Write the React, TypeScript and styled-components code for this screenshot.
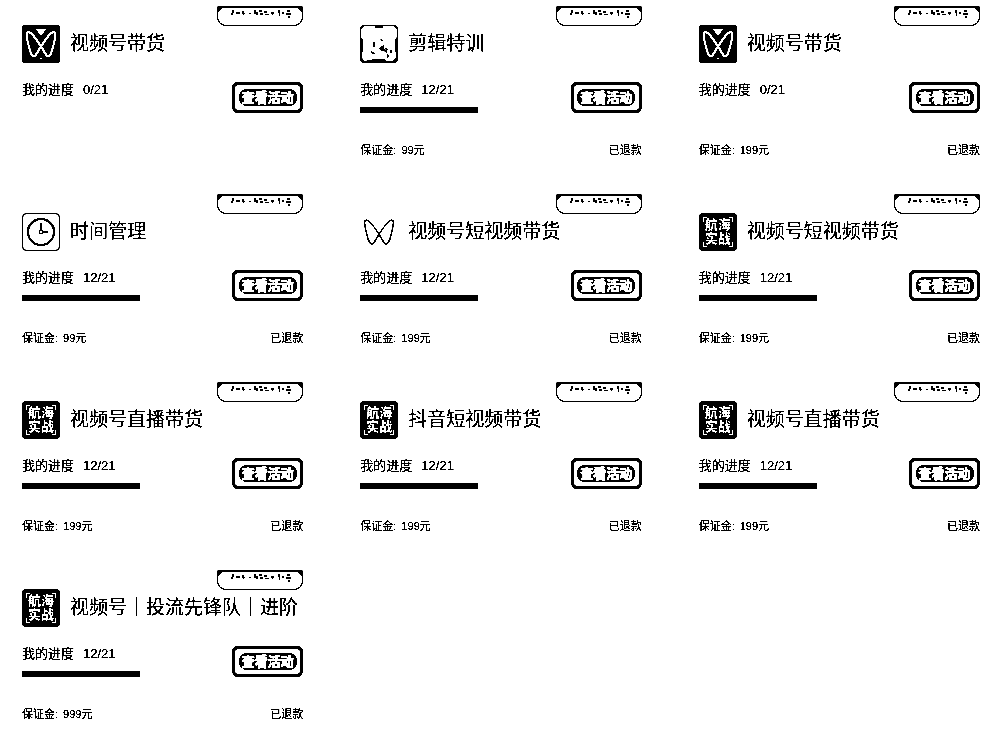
import React from 'react';
import styled, { createGlobalStyle } from 'styled-components';

const GlobalStyle = createGlobalStyle`
  * { box-sizing: border-box; }
  body { margin: 0; background: #fff; }
`;

const Page = styled.main`
  min-height: 100vh;
  padding: 6px 26px 0 22px;
  background: #fff;
  color: #000;
  font-family: "Liberation Sans", "Noto Sans CJK SC", sans-serif;
  filter: brightness(0.75) contrast(20);
`;

const Grid = styled.div`
  display: grid;
  grid-template-columns: repeat(3, minmax(0, 1fr));
  grid-auto-rows: minmax(188px, auto);
  column-gap: 57px;
`;

const Card = styled.article`
  position: relative;
  display: flex;
  flex-direction: column;
  padding-top: 18px;
`;

const Badge = styled.span`
  position: absolute;
  top: 0;
  right: 0;
  width: 86px;
  height: 20px;
  border: 1px solid #000;
  border-top-width: 2px;
  border-radius: 2px 2px 9px 9px;
`;

const Marks = styled.svg`
  display: block;
  width: 84px;
  height: 14px;
`;

const Heading = styled.header`
  display: flex;
  align-items: center;
  gap: 10px;
  height: 39px;
`;

const Title = styled.h2`
  margin: 0;
  font-size: 19px;
  line-height: 28px;
  font-weight: 400;
  white-space: nowrap;
`;

const Body = styled.div`
  display: flex;
  justify-content: space-between;
  align-items: flex-end;
  height: 50px;
`;

const Progress = styled.div`
  align-self: stretch;
  padding-top: 18px;
  width: 118px;
`;

const ProgressLabel = styled.div`
  display: flex;
  gap: 9px;
  font-size: 13px;
  line-height: 18px;
`;

const Bar = styled.div`
  margin-top: 8px;
  height: 6px;
  background: #000;
`;

const ViewButton = styled.button`
  display: flex;
  align-items: center;
  justify-content: center;
  width: 71px;
  height: 31px;
  padding: 0;
  border: 3px solid #000;
  border-radius: 6px;
  background: #fff;
  font-family: inherit;
`;

const ButtonLabel = styled.span`
  width: 58px;
  height: 17px;
  border-radius: 8px;
  background: #000;
  color: #fff;
  font-size: 13px;
  line-height: 17px;
  font-weight: 700;
  text-align: center;
  white-space: nowrap;
  -webkit-text-stroke: 1px #fff;
`;

const Footer = styled.footer`
  display: flex;
  justify-content: space-between;
  margin-top: 29px;
  font-size: 11px;
  line-height: 16px;
`;

const Deposit = styled.span`
  display: flex;
  gap: 5px;
`;

const Icon = styled.svg`
  flex: none;
  width: 38px;
  height: 38px;
`;

const SealFrame = styled.div`
  position: relative;
  flex: none;
  width: 38px;
  height: 38px;
  border-radius: 4px;
  background: #000;
  color: #fff;
  display: flex;
  flex-direction: column;
  justify-content: center;
  text-align: center;
  font-size: 13px;
  line-height: 14px;
  font-weight: 900;
`;

const SealCorners = styled.svg`
  position: absolute;
  inset: 0;
`;

const WINGS =
  'M19 21.5 C15 15 10 7 6 7 C3.5 7 5 14 6.5 20 C8 26 9 31 12 31 C14.500 31 16 25 19 21.5 C23 15 28 7 32 7 C34.500 7 33 14 31.500 20 C30 26 29 31 26 31 C23.500 31 22 25 19 21.500 Z';

type Kind = 'wings' | 'outline' | 'clock' | 'edit' | 'seal';

function CardIcon({ kind }: { kind: Kind }) {
  if (kind === 'seal') {
    return (
      <SealFrame>
        <SealCorners width="38" height="38" viewBox="0 0 38 38" aria-hidden="true">
          <path
            d="M4.500 9V4.500H8 M30 4.500H33.500V9 M4.500 29V33.500H8 M30 33.500H33.500V29"
            fill="none"
            stroke="#fff"
          />
        </SealCorners>
        <span>航海</span>
        <span>实战</span>
      </SealFrame>
    );
  }
  return (
    <Icon viewBox="0 0 38 38" aria-hidden="true">
      {kind === 'wings' && (
        <>
          <rect width="38" height="38" rx="3" />
          <path d={WINGS} fill="none" stroke="#fff" strokeWidth="2.4" />
          <path d="M14 4h10l-3 5h-1v1h-2v-1h-1z M18 33h2v1h-2z" fill="#fff" />
        </>
      )}
      {kind === 'outline' && <path d={WINGS} fill="none" stroke="#000" strokeWidth="1.200" />}
      {kind === 'clock' && (
        <>
          <rect x="0.5" y="0.5" width="37" height="37" rx="4" fill="none" stroke="#000" />
          <circle cx="19" cy="19" r="13" fill="none" stroke="#000" strokeWidth="2" />
          <path d="M19 10v8 M20 19h6" stroke="#000" strokeWidth="1.6" />
          <rect x="17.5" y="17.5" width="3" height="3" fill="#fff" stroke="#000" />
        </>
      )}
      {kind === 'edit' && (
        <>
          <path
            fillRule="evenodd"
            d="M3 0H35L38 3V35L35 38H3L0 35V3Z M4 1L1 4V13L3 15V26L2 28V33L4 36L12 35L13 34H24L26 36H33L36 33V28L35 26V15L37 12V4L34 1H23V3H15V1Z"
          />
          <path d="M13 17h2v5h-2z M11 26l4 2v1l-4-1z M20 14l3 1-1 1z M19 23l5-3v4l2 1 1 3-3-2-4-1z M25 23l3 1-1 2z M27 29l2 2-1 2-1-1z M30 25h2v3h-2z" />
        </>
      )}
    </Icon>
  );
}

function BadgeMarks() {
  return (
    <Marks viewBox="0 0 84 14" aria-hidden="true">
      <path d="M0 0h4l-4 4z M84 0h-4l4 4z" />
      <path d="M14 2h2v3h-1v2h-2v-2h1z M18 4h4v2h-4z M24 3h2v2h1v1h-1v1h-1v-1h-1z M31 5h2v1h-2z M36 2h2v2h2v3h-2v-1h-2z M41 2h3v2h-3z M42 5h3v2h-3z M46 3h3v2h-3z M47 6h4v1h-4z M53 4h3v2h-3z M54 6h1v1h-1z M60 2h2v6h-1v-3h-1z M64 4h2v2h-2z M69 2h3v2h-3z M68 5h5v2h-5z M70 8h2v2h-2z" />
    </Marks>
  );
}

interface Activity {
  icon: Kind;
  title: string;
  progress: string;
  deposit?: string;
}

const activities: Activity[] = [
  { icon: 'wings', title: '视频号带货', progress: '0/21' },
  { icon: 'edit', title: '剪辑特训', progress: '12/21', deposit: '99元' },
  { icon: 'wings', title: '视频号带货', progress: '0/21', deposit: '199元' },
  { icon: 'clock', title: '时间管理', progress: '12/21', deposit: '99元' },
  { icon: 'outline', title: '视频号短视频带货', progress: '12/21', deposit: '199元' },
  { icon: 'seal', title: '视频号短视频带货', progress: '12/21', deposit: '199元' },
  { icon: 'seal', title: '视频号直播带货', progress: '12/21', deposit: '199元' },
  { icon: 'seal', title: '抖音短视频带货', progress: '12/21', deposit: '199元' },
  { icon: 'seal', title: '视频号直播带货', progress: '12/21', deposit: '199元' },
  { icon: 'seal', title: '视频号｜投流先锋队｜进阶', progress: '12/21', deposit: '999元' },
];

export default function App() {
  return (
    <>
      <GlobalStyle />
      <Page>
        <Grid>
          {activities.map((a, i) => (
            <Card key={i}>
              <Badge>
                <BadgeMarks />
              </Badge>
              <Heading>
                <CardIcon kind={a.icon} />
                <Title>{a.title}</Title>
              </Heading>
              <Body>
                <Progress>
                  <ProgressLabel>
                    <span>我的进度</span>
                    <span>{a.progress}</span>
                  </ProgressLabel>
                  {a.progress !== '0/21' && <Bar />}
                </Progress>
                <ViewButton type="button">
                  <ButtonLabel>查看活动</ButtonLabel>
                </ViewButton>
              </Body>
              {a.deposit && (
                <Footer>
                  <Deposit>
                    <span>保证金:</span>
                    <span>{a.deposit}</span>
                  </Deposit>
                  <span>已退款</span>
                </Footer>
              )}
            </Card>
          ))}
        </Grid>
      </Page>
    </>
  );
}
